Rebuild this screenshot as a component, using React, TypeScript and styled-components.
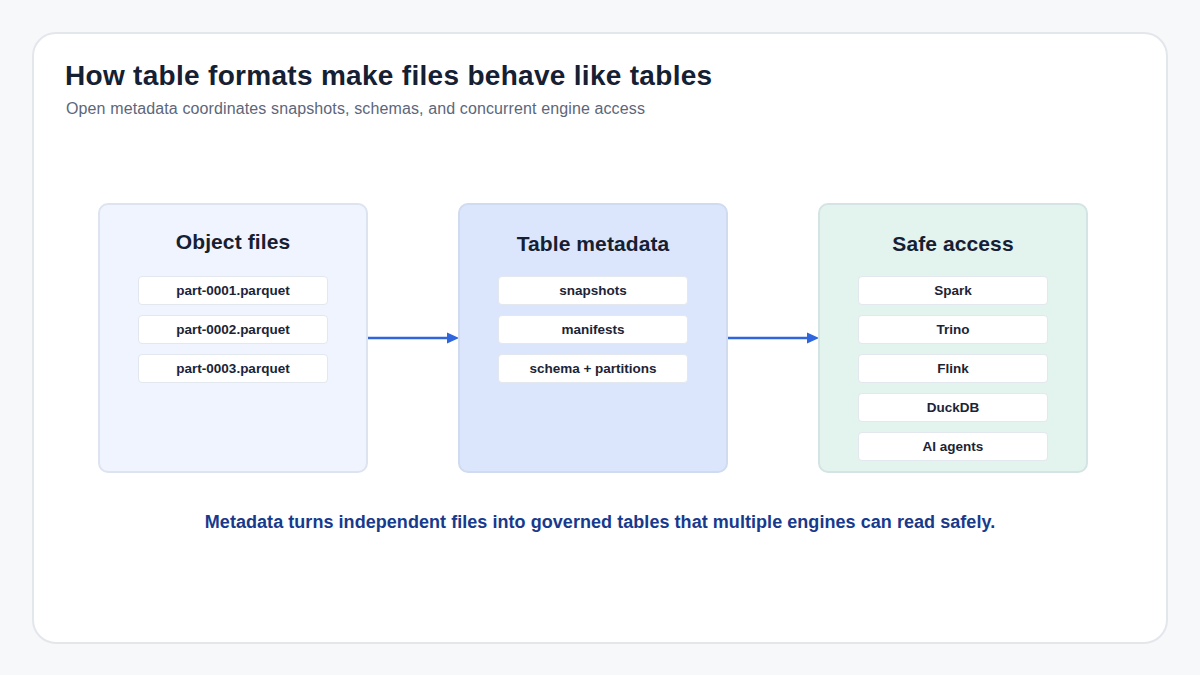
import React from "react";
import styled, { createGlobalStyle } from "styled-components";

const Global = createGlobalStyle`
  html, body { margin: 0; padding: 0; width: 1200px; height: 675px; overflow: hidden; background: #f7f8fa; }
  body { font-family: "Liberation Sans", Arial, sans-serif; }
`;
const Page = styled.div`
  box-sizing: border-box;
  width: 1200px;
  height: 675px;
  padding: 32px;
  background: #f7f8fa;
`;
const Card = styled.main`
  box-sizing: border-box;
  height: 612px;
  background: #fff;
  border: 2px solid #e3e6eb;
  border-radius: 24px;
  padding: 24px 31px 0 31px;
  display: flex;
  flex-direction: column;
`;
const Title = styled.h1`
  margin: 0;
  font-size: 28px;
  line-height: 36px;
  font-weight: 700;
  color: #152033;
  letter-spacing: 0.3px;
`;
const Subtitle = styled.p`
  margin: 4px 0 0 1px;
  font-size: 16px;
  line-height: 22px;
  color: #5d6679;
  letter-spacing: 0.12px;
`;
const Diagram = styled.div`
  display: flex;
  justify-content: center;
  margin: 83px 14px 0 0;
`;
const Panel = styled.section<{ $bg: string; $border: string }>`
  box-sizing: border-box;
  width: 270px;
  height: 270px;
  background: ${(p) => p.$bg};
  border: 2px solid ${(p) => p.$border};
  border-radius: 10px;
  padding: 25px 38px 0;
  display: flex;
  flex-direction: column;
  align-items: center;
`;
const PanelTitle = styled.h2<{ $shift: number }>`
  margin: ${(p) => p.$shift}px 0 ${(p) => 20 - p.$shift}px;
  font-size: 21px;
  line-height: 26px;
  font-weight: 700;
  color: #152033;
  letter-spacing: 0.1px;
`;
const Items = styled.ul`
  list-style: none;
  margin: 0;
  padding: 0;
  width: 190px;
  display: flex;
  flex-direction: column;
  gap: 10px;
`;
const Item = styled.li`
  box-sizing: border-box;
  height: 29px;
  background: #fff;
  border: 1px solid #e3e7ee;
  border-radius: 4px;
  display: flex;
  align-items: center;
  justify-content: center;
  font-size: 13.5px;
  font-weight: 700;
  color: #1b2436;
`;
const ArrowWrap = styled.div`
  width: 90px;
  height: 270px;
  display: flex;
  align-items: center;
`;
const Arrow = styled.svg`
  display: block;
  width: 90px;
  height: 12px;
`;
const Note = styled.p`
  margin: 37px 0 0;
  text-align: center;
  font-size: 18px;
  line-height: 24px;
  font-weight: 700;
  color: #173a8c;
  letter-spacing: 0.05px;
`;

const FlowArrow = () => (
  <ArrowWrap>
    <Arrow viewBox="0 0 90 12" aria-hidden="true">
      <line x1="0" y1="6" x2="82" y2="6" stroke="#2f66dd" strokeWidth="2.4" />
      <polygon points="79,0.5 91,6 79,11.5" fill="#2f66dd" />
    </Arrow>
  </ArrowWrap>
);

const panels = [
  { title: "Object files", bg: "#eff4fe", border: "#dde4f0", shift: -1, items: ["part-0001.parquet", "part-0002.parquet", "part-0003.parquet"] },
  { title: "Table metadata", bg: "#dbe6fd", border: "#d0dbf0", shift: 1, items: ["snapshots", "manifests", "schema + partitions"] },
  { title: "Safe access", bg: "#e3f3ed", border: "#d4e3e3", shift: 1, items: ["Spark", "Trino", "Flink", "DuckDB", "AI agents"] },
];

export default function App() {
  return (
    <Page>
      <Global />
      <Card>
        <Title>How table formats make files behave like tables</Title>
        <Subtitle>Open metadata coordinates snapshots, schemas, and concurrent engine access</Subtitle>
        <Diagram>
          {panels.map((p, i) => (
            <React.Fragment key={p.title}>
              {i > 0 && <FlowArrow />}
              <Panel $bg={p.bg} $border={p.border}>
                <PanelTitle $shift={p.shift}>{p.title}</PanelTitle>
                <Items>
                  {p.items.map((t) => (
                    <Item key={t}>{t}</Item>
                  ))}
                </Items>
              </Panel>
            </React.Fragment>
          ))}
        </Diagram>
        <Note>Metadata turns independent files into governed tables that multiple engines can read safely.</Note>
      </Card>
    </Page>
  );
}
